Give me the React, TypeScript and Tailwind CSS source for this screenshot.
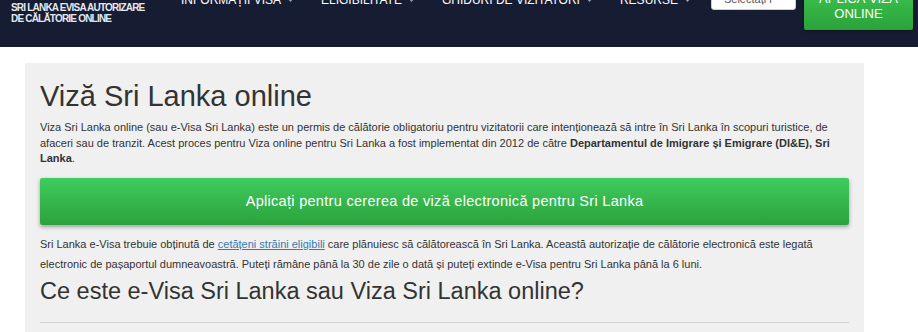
import React from 'react';

const navItems = ['INFORMAȚII VISA', 'ELIGIBILITATE', 'GHIDURI DE VIZITATORI', 'RESURSE'];

const Caret: React.FC = () => (
  <svg width="7" height="5" viewBox="0 0 7 5" className="ml-[6px] inline-block">
    <path d="M0 0 L7 0 L3.5 4 Z" fill="#9aa0ad" />
  </svg>
);

const Header: React.FC = () => (
  <header className="h-[47px] bg-[#161d33] overflow-hidden">
    <div className="flex items-start -mt-[14px] pl-[11px] pr-[4px]">
      <div className="mt-[16px] text-[10px] leading-[11px] font-bold text-[#e6e8ee] tracking-[-0.8px] w-[170px] whitespace-nowrap">
        SRI LANKA EVISA AUTORIZARE
        <br />
        DE CĂLĂTORIE ONLINE
      </div>
      <nav className="flex items-center gap-[27px] h-[20px] mt-[4px]">
        {navItems.map((item) => (
          <span key={item} className="flex items-center text-[12px] text-white whitespace-nowrap">
            {item}
            <Caret />
          </span>
        ))}
      </nav>
      <div className="ml-[20px] mt-[2px] w-[85px] h-[22px] bg-white rounded-[3px] border border-[#ccc] flex items-center pl-[12px] text-[11px] text-[#555]">
        Selectați l
      </div>
      <button className="ml-[8px] w-[109px] h-[44px] rounded-[2px] bg-gradient-to-b from-[#3fc652] to-[#2aa23a] text-white text-[13px] leading-[15px] pb-[4px] shadow-[0_1px_3px_rgba(0,0,0,0.5)]">
        APLICĂ VIZA
        <br />
        ONLINE
      </button>
    </div>
  </header>
);

const App: React.FC = () => {
  return (
    <div className="min-h-[332px] bg-white font-['Liberation_Sans',Arial,sans-serif] text-[#333]">
      <Header />
      <main className="pt-[16px] pl-[25px] pr-[54px]">
        <section className="bg-[#f0f0f0] px-[15px] pt-[17px] pb-[10px]">
          <h1 className="text-[29px] leading-[32px] text-[#333]">Viză Sri Lanka online</h1>
          <p className="mt-[8px] text-[11px] leading-[15.7px]">
            Viza Sri Lanka online (sau e-Visa Sri Lanka) este un permis de călătorie obligatoriu pentru vizitatorii care intenționează să intre în Sri Lanka în scopuri turistice, de afaceri sau de tranzit. Acest proces pentru Viza online pentru Sri Lanka a fost implementat din 2012 de către{' '}
            <strong>Departamentul de Imigrare și Emigrare (DI&amp;E), Sri Lanka</strong>.
          </p>
          <button className="mt-[11px] w-full h-[47px] rounded-[2px] bg-gradient-to-b from-[#40cc5e] to-[#2ca23c] text-white text-[14.5px] tracking-[0.3px] shadow-[0_2px_4px_rgba(0,0,0,0.35)]">
            Aplicați pentru cererea de viză electronică pentru Sri Lanka
          </button>
          <p className="mt-[9px] text-[11px] leading-[20px]">
            Sri Lanka e-Visa trebuie obținută de{' '}
            <a href="#" className="text-[#337ab7] underline">cetățeni străini eligibili</a>{' '}
            care plănuiesc să călătorească în Sri Lanka. Această autorizație de călătorie electronică este legată electronic de pașaportul dumneavoastră. Puteți rămâne până la 30 de zile o dată și puteți extinde e-Visa pentru Sri Lanka până la 6 luni.
          </p>
          <h2 className="mt-[3px] text-[23.5px] leading-[28px] text-[#333]">
            Ce este e-Visa Sri Lanka sau Viza Sri Lanka online?
          </h2>
          <hr className="mt-[17px] border-t border-[#d5d5d5]" />
        </section>
      </main>
    </div>
  );
};

export default App;
